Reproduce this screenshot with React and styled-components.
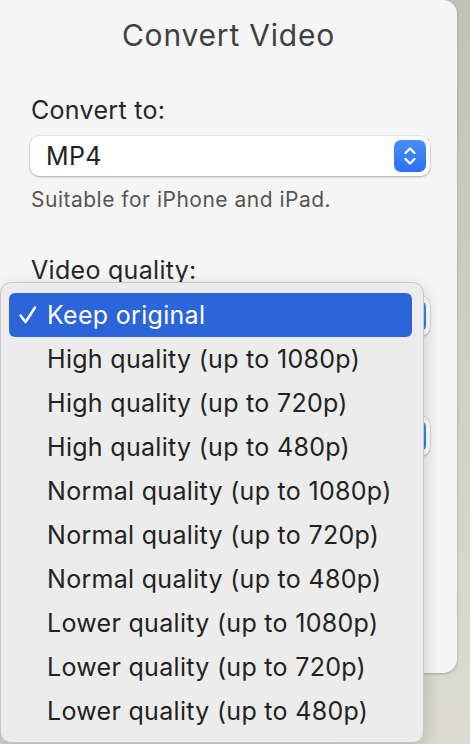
import React from "react"
import styled, { createGlobalStyle } from "styled-components"

const GlobalStyle = createGlobalStyle`
	html, body {
		margin: 0;
		padding: 0;
		width: 470px;
		height: 744px;
		overflow: hidden;
		font-family: Inter, "Noto Sans", "Liberation Sans", sans-serif;
		-webkit-font-smoothing: antialiased;
	}
`

const Desktop = styled.div`
	position: relative;
	width: 470px;
	height: 744px;
	overflow: hidden;
	background: linear-gradient(160deg, #b9bbb0 0%, #cfd0c4 55%, #dcdcd0 100%);
`

const Window = styled.div`
	width: 469px;
	height: 673px;
	margin-left: -12px;
	padding-left: 12px;
	box-sizing: border-box;
	background: #f5f5f5;
	border-radius: 0 14px 14px 0;
	box-shadow: 0 1px 3px rgba(0, 0, 0, 0.25);
	display: flex;
	flex-direction: column;
`

const Title = styled.div`
	padding-top: 17px;
	line-height: 36px;
	text-align: center;
	font-size: 30px;
	color: #3f3f3f;
	letter-spacing: 0.8px;
`

const Section = styled.div`
	padding: 0 0 0 30px;
	margin-top: ${p => p.top}px;
	display: flex;
	flex-direction: column;
`

const Label = styled.div`
	min-height: 28px;
	font-size: 25px;
	line-height: 28px;
	letter-spacing: 0.3px;
	color: #262626;
	padding-left: 1px;
`

const Select = styled.div`
	margin-top: ${p => p.gap}px;
	width: 400px;
	height: 40px;
	box-sizing: border-box;
	background: #fff;
	border-radius: 9px;
	box-shadow: 0 0 0 0.5px rgba(0, 0, 0, 0.12), 0 1px 2px rgba(0, 0, 0, 0.25);
	display: flex;
	align-items: center;
	justify-content: space-between;
	padding: 0 4px 0 16px;
	font-size: 25px;
	letter-spacing: 0.3px;
	color: #222;
`

const Stepper = styled.div`
	width: 32px;
	height: 32px;
	border-radius: 7px;
	background: linear-gradient(180deg, #4690fa 0%, #2d6ff2 100%);
	display: flex;
	align-items: center;
	justify-content: center;
`

const Hint = styled.div`
	margin-top: 12px;
	font-size: 21px;
	line-height: 24px;
	letter-spacing: 0.5px;
	color: #555;
	padding-left: 1px;
`

const Menu = styled.div`
	position: absolute;
	left: 0;
	top: 282px;
	width: 424px;
	height: 461px;
	box-sizing: border-box;
	padding: 10px 11px 0 8px;
	background: #ececec;
	border: 1px solid #c6c6c6;
	border-radius: 11px;
	box-shadow: 0 6px 18px rgba(0, 0, 0, 0.18);
	display: flex;
	flex-direction: column;
`

const Item = styled.div`
	height: 44px;
	flex-shrink: 0;
	display: flex;
	align-items: center;
	border-radius: 6px;
	font-size: 25px;
	letter-spacing: 0.3px;
	color: ${p => (p.selected ? "#fff" : "#222")};
	background: ${p => (p.selected ? "#2c64d9" : "transparent")};
`

const Check = styled.span`
	width: 38px;
	display: flex;
	justify-content: center;
`

const qualities = [
	"Keep original",
	"High quality (up to 1080p)",
	"High quality (up to 720p)",
	"High quality (up to 480p)",
	"Normal quality (up to 1080p)",
	"Normal quality (up to 720p)",
	"Normal quality (up to 480p)",
	"Lower quality (up to 1080p)",
	"Lower quality (up to 720p)",
	"Lower quality (up to 480p)",
]

const UpDown = () => (
	<svg width="14" height="20" viewBox="0 0 14 20" fill="none" stroke="#fff" strokeWidth="2.2" strokeLinecap="round" strokeLinejoin="round">
		<path d="M2.5 7 L7 2.5 L11.5 7" />
		<path d="M2.5 13 L7 17.5 L11.5 13" />
	</svg>
)

const Tick = () => (
	<svg width="20" height="20" viewBox="0 0 20 20" fill="none" stroke="#fff" strokeWidth="2.5" strokeLinecap="round" strokeLinejoin="round">
		<path d="M2.5 10.5 L7.5 17 L17 2.5" />
	</svg>
)

export default function App() {
	return (
		<Desktop>
			<GlobalStyle />
			<Window>
				<Title>Convert Video</Title>
				<Section top={43}>
					<Label>Convert to:</Label>
					<Select gap={12}>
						<span>MP4</span>
						<Stepper><UpDown /></Stepper>
					</Select>
					<Hint>Suitable for iPhone and iPad.</Hint>
				</Section>
				<Section top={44}>
					<Label>Video quality:</Label>
					{/* value hidden under the open menu */}
					<Select gap={12}>
						<span />
						<Stepper><UpDown /></Stepper>
					</Select>
				</Section>
				<Section top={38}>
					<Label />
					<Select gap={14}>
						<span />
						<Stepper><UpDown /></Stepper>
					</Select>
				</Section>
			</Window>
			<Menu>
				{qualities.map((q, i) => (
					<Item key={q} selected={i === 0}>
						<Check>{i === 0 ? <Tick /> : null}</Check>
						<span>{q}</span>
					</Item>
				))}
			</Menu>
		</Desktop>
	)
}
